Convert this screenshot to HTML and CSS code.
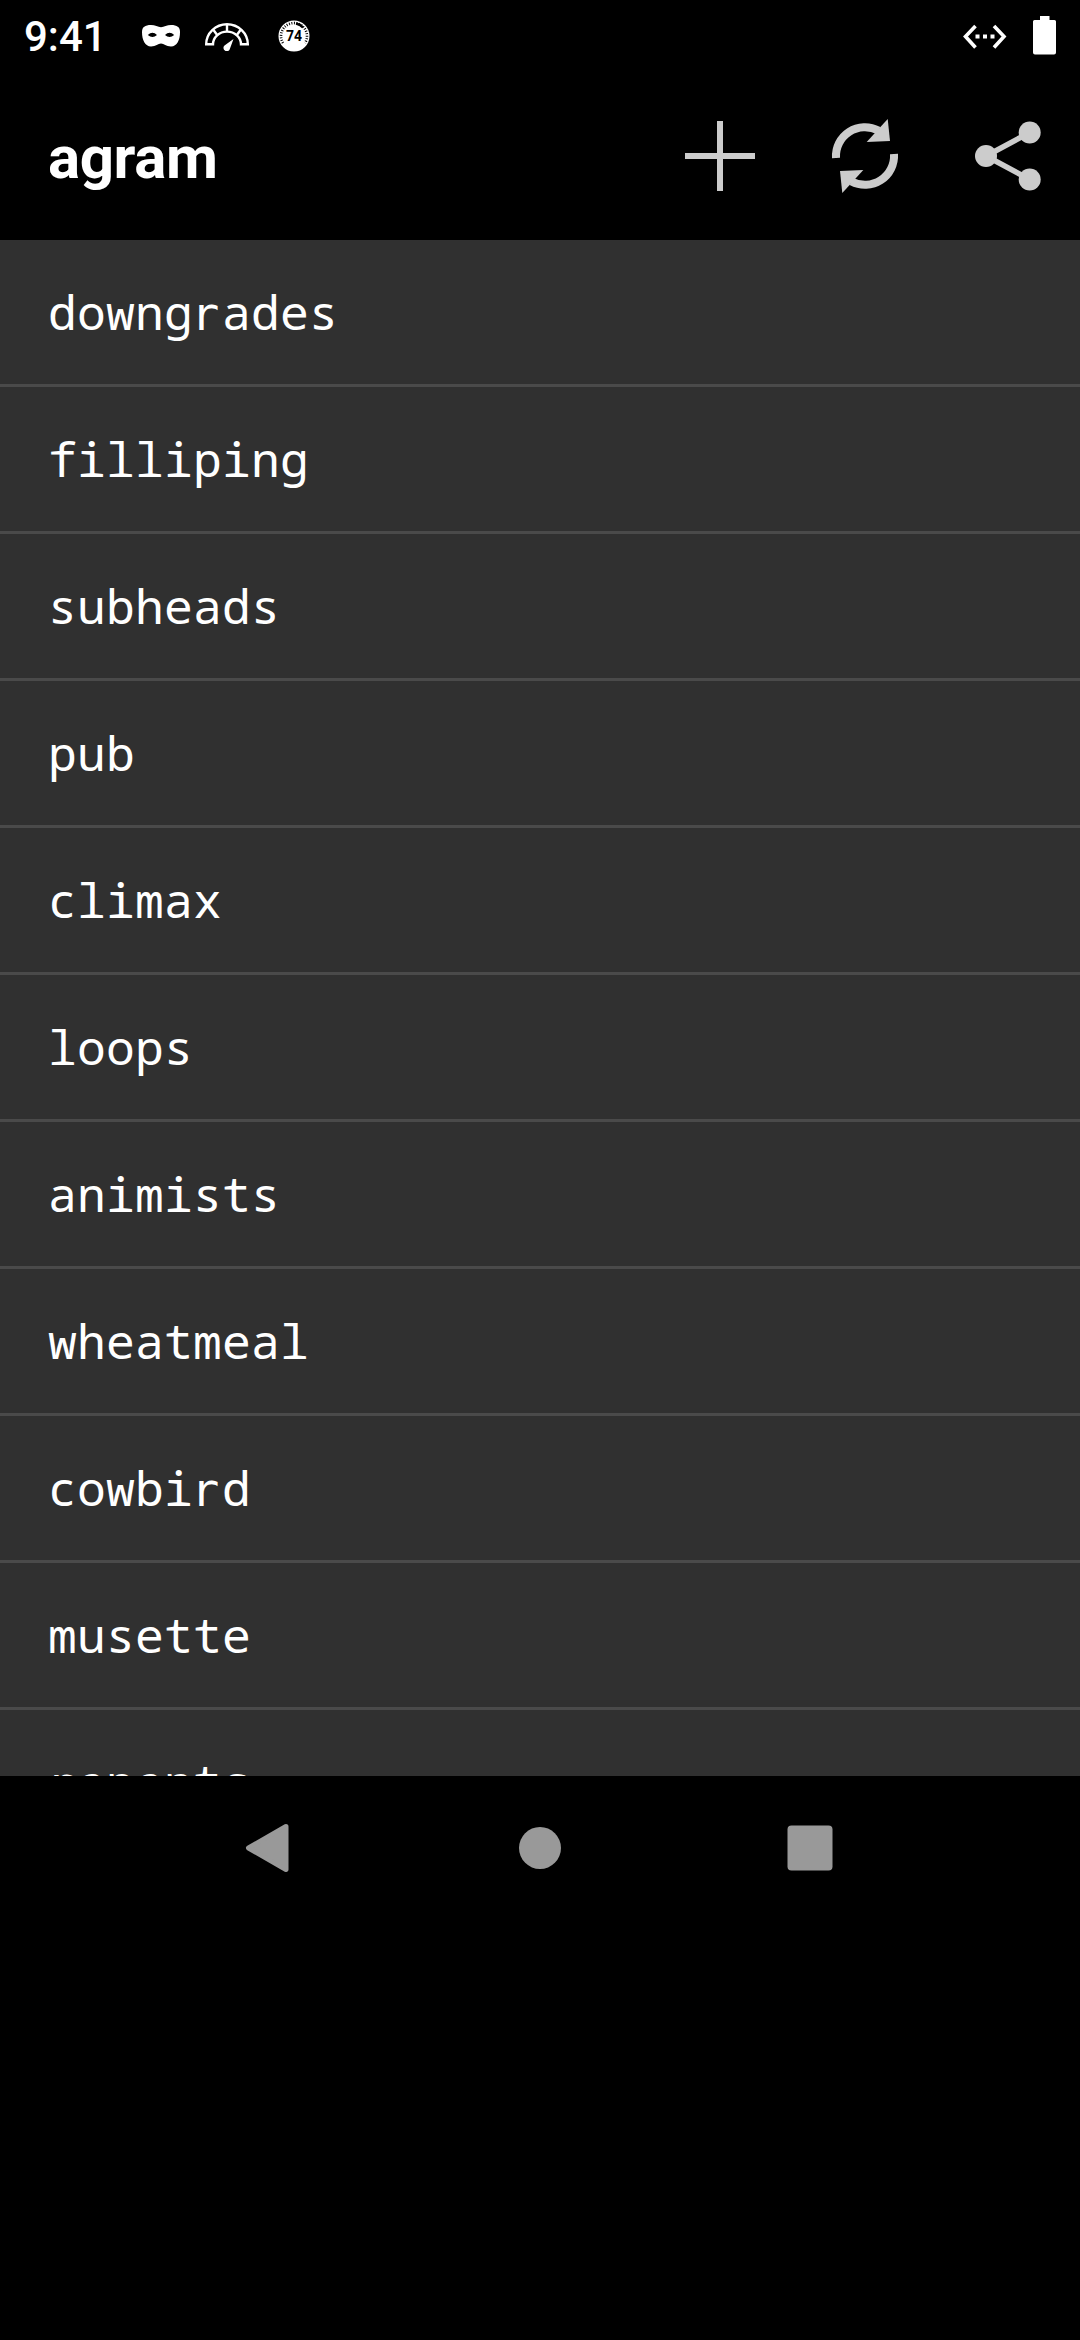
FILE: index.html
```html
<!DOCTYPE html>
<html lang="en">
<head>
<meta charset="utf-8">
<title>agram</title>
<link rel="stylesheet" href="styles.css">
</head>
<body>
<div class="status">
  <span class="time">9:41</span>
  <svg class="mask" width="40" height="24" viewBox="0 0 40 24"><path fill="#fff" fill-rule="evenodd" d="M10 1C14 1 17 3.200 20 3.200S26 1 30 1C36 1 39 3 39 8C39 16 36 22.500 30 22.500C25 22.500 23 19.500 20 19.500S15 22.500 10 22.500C4 22.500 1 16 1 8C1 3 4 1 10 1ZM6.800 11Q11.500 6.500 16 11Q11.500 15 6.800 11ZM24 11Q28.500 6.500 33.200 11Q28.500 15 24 11Z"/></svg>
  <svg class="gauge" width="44" height="28" viewBox="0 0 44 28"><g fill="none" stroke="#fff" stroke-width="2.400"><path d="M1.200 21.300A20.800 20 0 0 1 42.800 21.300H36A14 12.700 0 0 0 8 21.300Z"/><path d="M22 1V9M8.500 7L12.500 12.500M35.500 7L31.500 12.500"/></g><path fill="#fff" d="M28.500 16L25 25.500A3.300 3.300 0 1 1 19.500 22.500Z"/></svg>
  <svg class="badge" width="32" height="32" viewBox="0 0 32 32"><circle cx="16" cy="16" r="15.500" fill="#fff"/><path d="M5 23A13 13 0 1 1 27 23" fill="none" stroke="#000" stroke-width="2.600" stroke-dasharray="1 1.500"/><path d="M18 3.500A12.500 12.500 0 0 1 25 7.500" fill="none" stroke="#000" stroke-width="2.600"/><text x="16" y="21" class="badge-text">74</text></svg>
  <svg class="ether" width="44" height="26" viewBox="0 0 44 26"><path d="M12.500 2L2.500 12.500L12.500 23.500M31 2L41 12.500L31 23.500" fill="none" stroke="#fff" stroke-width="3.600"/><path d="M12.500 10.500h4v4h-4zM20 10.500h4v4h-4zM27.500 10.500h4v4h-4z" fill="#fff"/></svg>
  <svg class="battery" width="24" height="40" viewBox="0 0 24 40"><path fill="#fff" d="M7 1H16.500V5H21.500Q23 5 23 6.500V37.500Q23 39.500 21 39.500H2Q0 39.500 0 37.500V6.500Q0 5 1.500 5H7Z"/></svg>
</div>
<header class="bar">
  <h1 class="title">agram</h1>
  <div class="actions">
    <svg width="144" height="144" viewBox="0 0 144 144"><path fill="#ccc" d="M69 37h6v32h32v6H75v32h-6V75H37v-6h32z"/></svg>
    <svg width="144" height="144" viewBox="0 0 144 144"><g id="half"><path fill="none" stroke="#ccc" stroke-width="8" d="M44 74A29 29 0 0 1 86.500 46.500"/><path fill="#ccc" d="M95.700 35L98 57L74.700 58Z"/></g><use href="#half" transform="rotate(180 73 72)"/></svg>
    <svg width="144" height="144" viewBox="0 0 144 144"><path d="M93.700 48.500L50 72L93.700 95.500" fill="none" stroke="#ccc" stroke-width="5.500"/><g fill="#ccc"><circle cx="93.700" cy="48.500" r="11"/><circle cx="50" cy="72" r="11"/><circle cx="93.700" cy="95.500" r="11"/></g></svg>
  </div>
</header>
<ul class="list">
  <li>downg<span class="r">r</span>ades</li>
  <li>filliping</li>
  <li>subheads</li>
  <li>pub</li>
  <li>climax</li>
  <li>loops</li>
  <li>animists</li>
  <li>wheatmeal</li>
  <li>cowbi<span class="r">r</span>d</li>
  <li>musette</li>
  <li><span class="r">r</span>epents</li>
</ul>
<nav class="nav">
  <svg width="270" height="144" viewBox="0 0 270 144"><path d="M151 50.500L113.500 72L151 93.500Z" fill="#999" stroke="#999" stroke-width="5" stroke-linejoin="round"/></svg>
  <svg width="270" height="144" viewBox="0 0 270 144"><circle cx="135" cy="72" r="21" fill="#999"/></svg>
  <svg width="270" height="144" viewBox="0 0 270 144"><rect x="112.500" y="49.500" width="45" height="45" rx="4" fill="#999"/></svg>
</nav>
</body>
</html>
```
FILE: styles.css
```css
body {
  margin: 0;
  width: 1080px;
  height: 2340px;
  overflow: hidden;
  background: #000;
  color: #fff;
  font-family: Roboto, sans-serif;
}

svg {
  display: block;
  flex: none;
}

.status {
  display: flex;
  align-items: flex-start;
  height: 72px;
}

.time {
  width: 80px;
  margin: 12px 0 0 24px;
  font-size: 42px;
  line-height: 50px;
  font-weight: 500;
}

.mask { margin: 24px 0 0 37px; }
.gauge { margin: 23px 0 0 24px; }
.badge { margin: 20px 0 0 29px; }
.ether { margin: 24px 0 0 653px; }
.battery { margin: 15px 0 0 26px; }

.badge-text {
  font: 700 14px Roboto, sans-serif;
  text-anchor: middle;
}

.bar {
  display: flex;
  align-items: center;
  justify-content: space-between;
  height: 168px;
  padding-left: 48px;
}

.title {
  margin: 4px 0 0;
  font-size: 60px;
  line-height: 70px;
  font-weight: 700;
  letter-spacing: -0.4px;
}

.actions {
  display: flex;
  align-items: center;
  height: 168px;
}

.list {
  height: 1536px;
  margin: 0;
  padding: 0;
  overflow: hidden;
  list-style: none;
  background: #303030;
  font-family: "Droid Sans Mono", "Noto Sans Mono", "DejaVu Sans Mono", monospace;
  font-size: 48px;
  letter-spacing: 0.2px;
}

.list li {
  box-sizing: border-box;
  height: 147px;
  padding-left: 48px;
  border-bottom: 3px solid #4a4a4a;
  line-height: 144px;
}

/* Sans-style "r" without the slab foot, kept to one monospace cell */
.r {
  display: inline-block;
  width: 29px;
  font-family: "DejaVu Sans Mono", monospace;
  font-size: 47px;
  line-height: 0;
  text-indent: -2px;
}

.nav {
  display: flex;
  justify-content: center;
  height: 144px;
}
```
